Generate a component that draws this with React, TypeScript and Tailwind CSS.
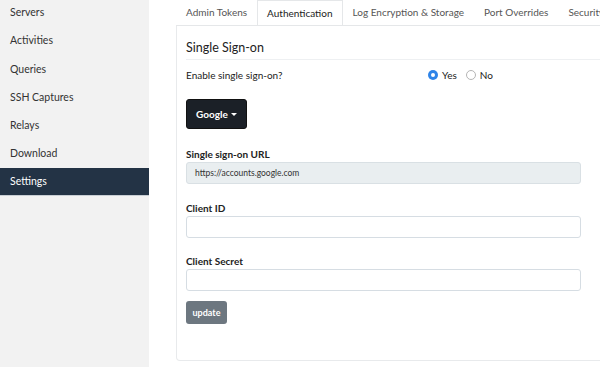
import React from 'react';

const navItems = ['Servers', 'Activities', 'Queries', 'SSH Captures', 'Relays', 'Download', 'Settings'];
const tabs = ['Admin Tokens', 'Authentication', 'Log Encryption & Storage', 'Port Overrides', 'Security'];

const Field: React.FC<{ label: string; value?: string; disabled?: boolean }> = ({ label, value, disabled }) => (
  <div className="flex flex-col">
    <label className="text-[10px] font-bold text-[#222] leading-[13px] mb-[1px]">{label}</label>
    <div
      className={`h-[22px] w-[395px] rounded-[3px] border px-[8px] flex items-center text-[8.5px] text-[#333] ${
        disabled ? 'bg-[#e9eef0] border-[#d9e0e4]' : 'bg-white border-[#d6dde3]'
      }`}
    >
      {value}
    </div>
  </div>
);

const App: React.FC = () => {
  return (
    <div className="flex h-[367px] w-[600px] overflow-hidden bg-white" style={{ fontFamily: 'Lato, "Open Sans", sans-serif' }}>
      <aside className="w-[149px] shrink-0 bg-[#f2f2f2]">
        <ul className="-mt-[1px]">
          {navItems.map((item) => (
            <li
              key={item}
              className={`h-[28.2px] flex items-center pl-[10px] text-[10.5px] ${
                item === 'Settings' ? 'bg-[#233345] text-white border-b border-[#c8ced4]' : 'text-[#333]'
              }`}
            >
              {item}
            </li>
          ))}
        </ul>
      </aside>
      <main className="flex-1 pl-[27px] overflow-hidden">
        <div className="flex h-[26px] border-b border-[#e5e7e9] w-[500px] overflow-hidden">
          {tabs.map((tab) => (
            <div
              key={tab}
              className={`shrink-0 px-[9px] flex items-center text-[10px] whitespace-nowrap ${
                tab === 'Authentication'
                  ? 'bg-white text-[#222] border border-[#e5e7e9] border-b-white -mb-px'
                  : 'text-[#555] border border-transparent'
              }`}
            >
              {tab}
            </div>
          ))}
        </div>
        <section className="h-[335px] w-[500px] border border-t-0 border-[#e8eaec] rounded-bl-[4px] pl-[9px] pt-[13px]">
          <h2 className="text-[12.5px] text-[#222] leading-[17px] pb-[3px] border-b border-[#eef0f2]">Single Sign-on</h2>
          <div className="flex items-center h-[24px] mt-[3px] text-[10px] text-[#222]">
            <span className="w-[242px]">Enable single sign-on?</span>
            <span className="flex items-center gap-[4px]">
              <span className="w-[10px] h-[10px] rounded-full bg-[#2f84e8] flex items-center justify-center">
                <span className="w-[4px] h-[4px] rounded-full bg-white" />
              </span>
              <span>Yes</span>
              <span className="ml-[5px] w-[10px] h-[10px] rounded-full border border-[#b5b5b5] bg-white" />
              <span>No</span>
            </span>
          </div>
          <button className="mt-[12px] h-[30px] w-[61px] rounded-[3px] bg-[#1b2027] border border-[#111] text-white text-[10px] font-bold flex items-center justify-center gap-[3px]">
            Google
            <span className="border-x-[3px] border-x-transparent border-t-[3px] border-t-white mt-[1px]" />
          </button>
          <div className="mt-[19px] flex flex-col gap-[17.5px]">
            <Field label="Single sign-on URL" value="https://accounts.google.com" disabled />
            <Field label="Client ID" />
            <Field label="Client Secret" />
          </div>
          <button className="mt-[10px] h-[23px] w-[41px] rounded-[3px] bg-[#6d7780] text-white text-[9px] font-bold">
            update
          </button>
        </section>
      </main>
    </div>
  );
};

export default App;
